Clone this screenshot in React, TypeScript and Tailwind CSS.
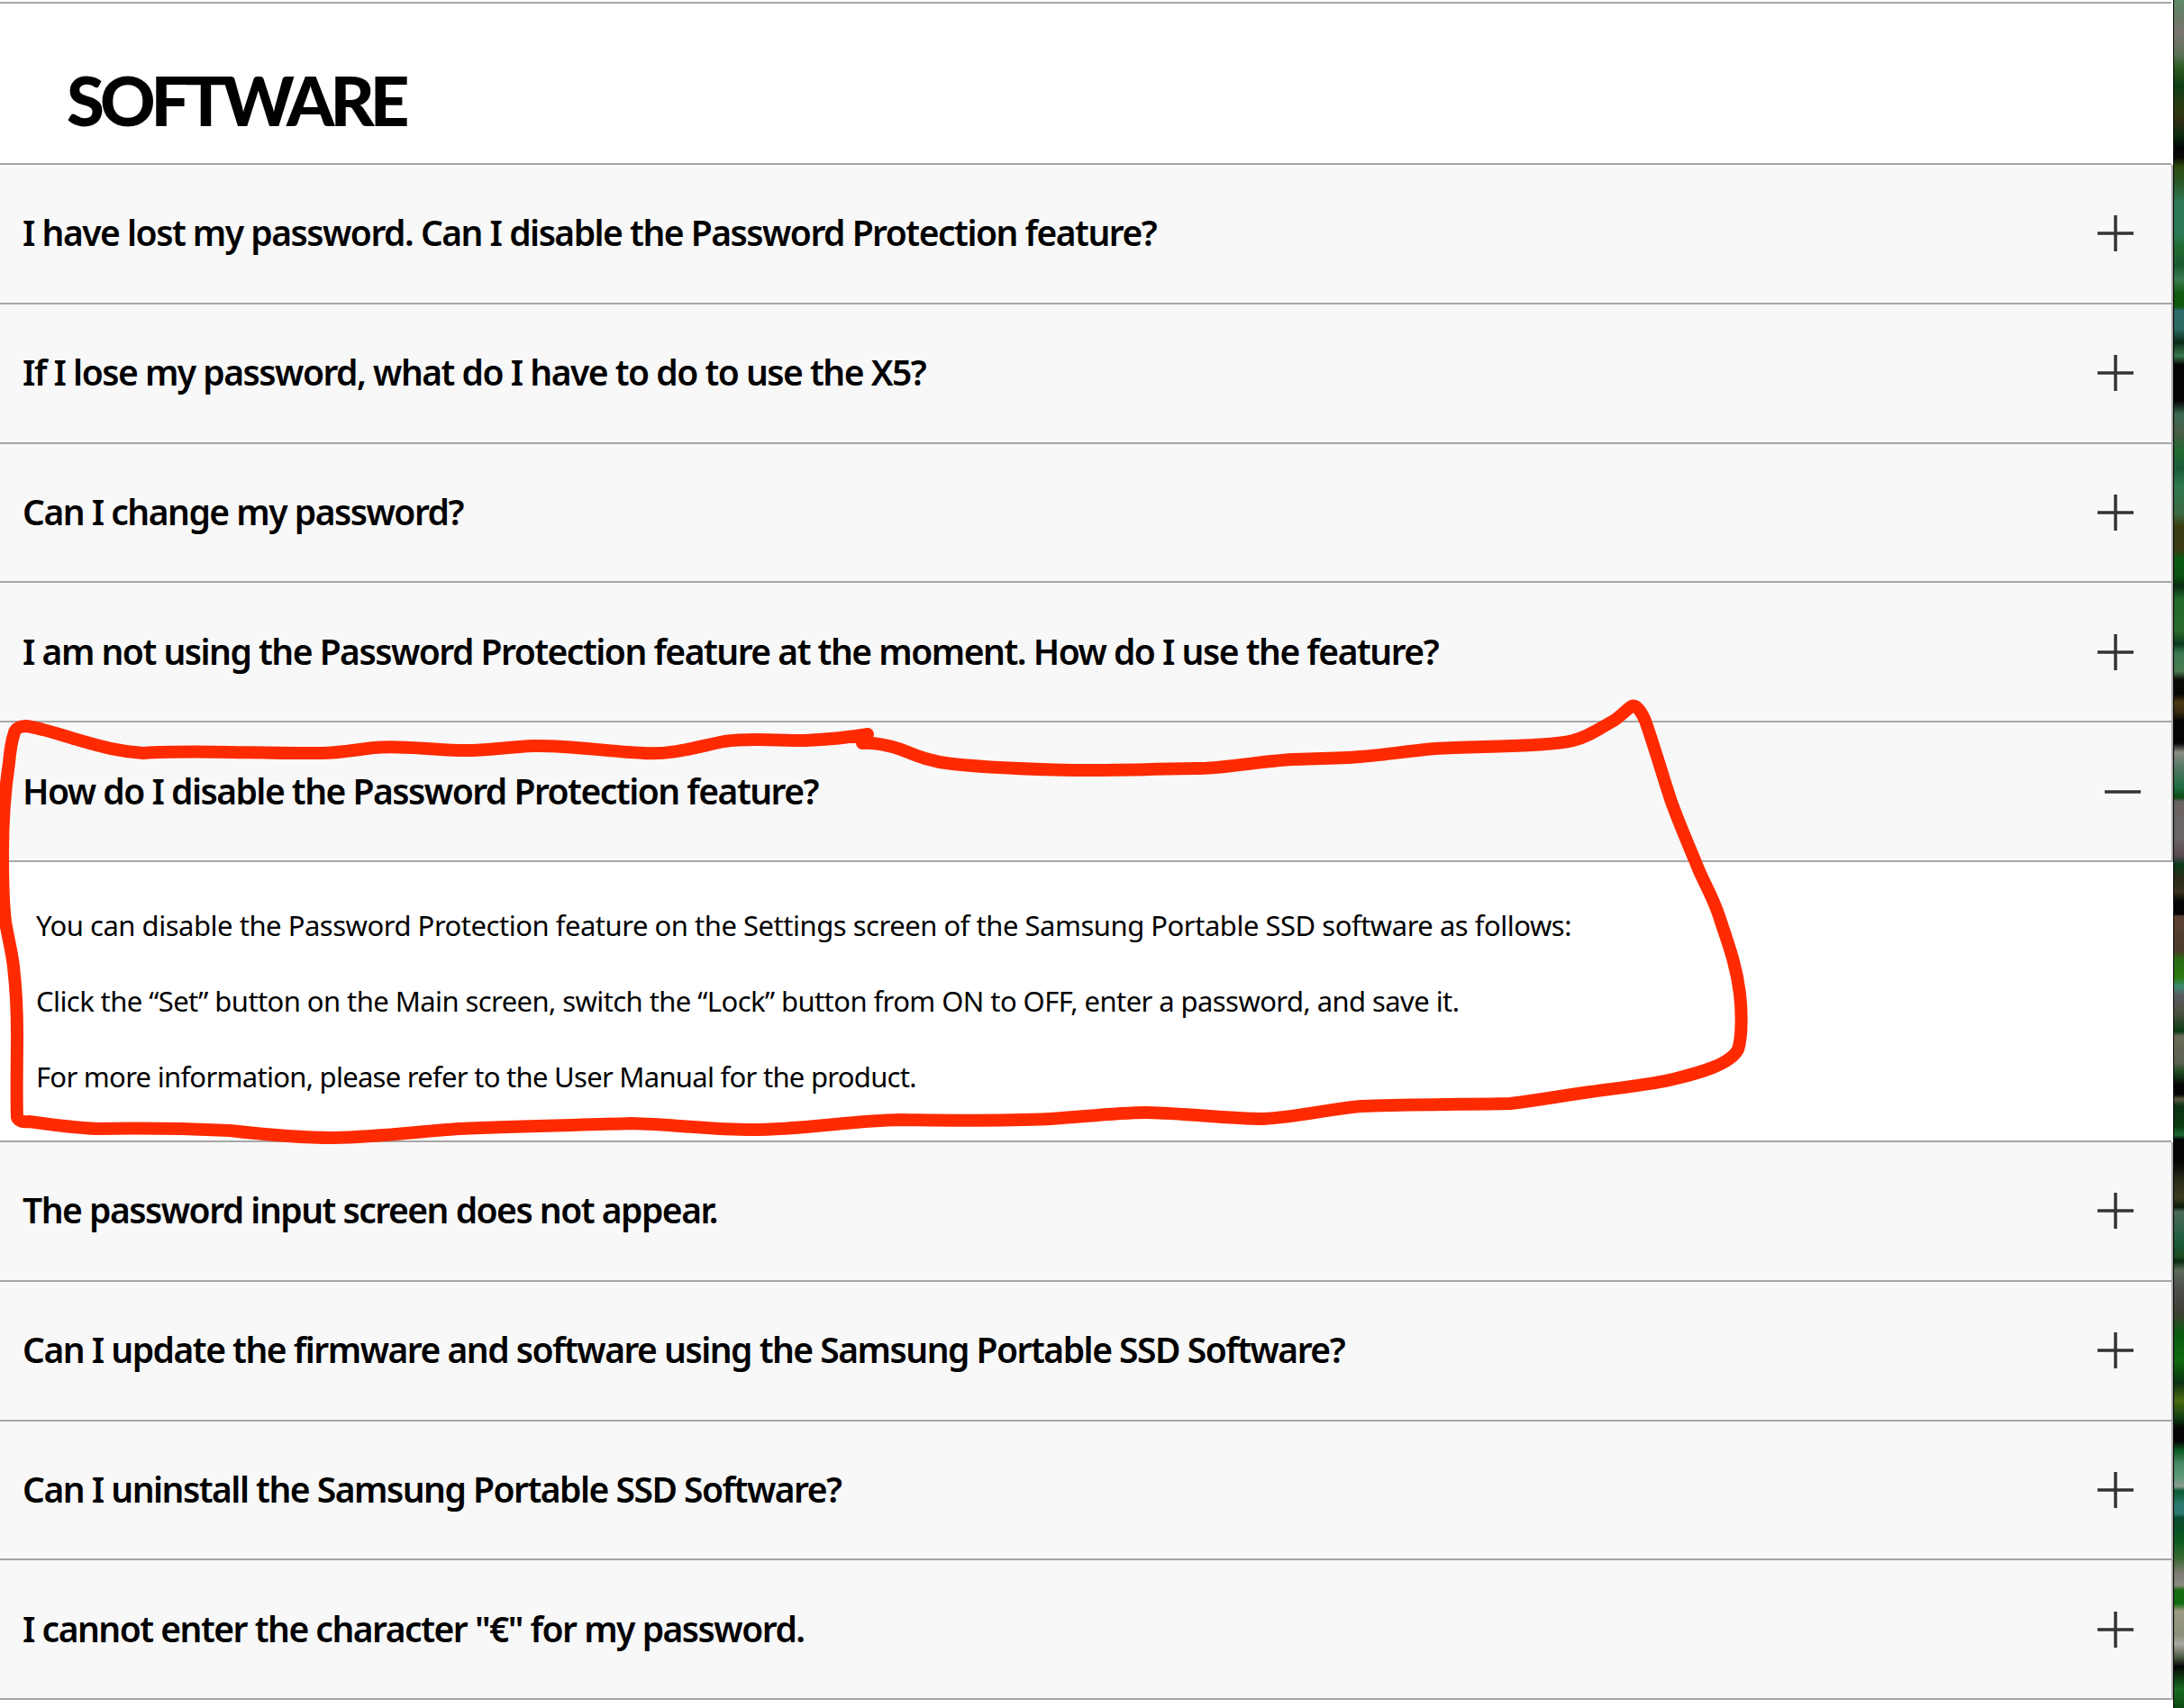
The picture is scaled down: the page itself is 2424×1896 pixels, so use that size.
import React from "react";

const faqsBefore = [
  "I have lost my password. Can I disable the Password Protection feature?",
  "If I lose my password, what do I have to do to use the X5?",
  "Can I change my password?",
  "I am not using the Password Protection feature at the moment. How do I use the feature?",
];

const faqsAfter = [
  "The password input screen does not appear.",
  "Can I update the firmware and software using the Samsung Portable SSD Software?",
  "Can I uninstall the Samsung Portable SSD Software?",
  'I cannot enter the character "€" for my password.',
];

// colours read off the sliver of desktop wallpaper at the right edge
const photoStops: [number, string][] = [
  [0, "#5f8a6a"], [20, "#6b7a68"], [35, "#7b7570"], [60, "#5c7258"], [75, "#2c5a20"], [95, "#0f3d14"],
  [120, "#2b3a12"], [135, "#2e2c12"], [150, "#0a2a10"], [165, "#050505"], [175, "#0a0a05"], [185, "#2c4a0e"],
  [205, "#2a5a2c"], [225, "#2e7a58"], [260, "#2e7a58"], [275, "#1e6a30"], [295, "#1a5a30"], [310, "#3a7a50"],
  [325, "#0f5a10"], [340, "#0c5a0c"], [345, "#2a6a6a"], [365, "#2a6a60"], [380, "#0a2a1a"], [395, "#3a7a50"],
  [405, "#050505"], [445, "#050505"], [460, "#3a6a50"], [480, "#4a5a48"], [500, "#1f6a30"], [520, "#1a5a3a"],
  [540, "#2e7a50"], [570, "#3a6a40"], [585, "#3a3a10"], [610, "#3a3a10"], [620, "#0a5a10"], [640, "#0a5010"],
  [650, "#0a2a10"], [665, "#1f6a2a"], [700, "#2a6a2a"], [715, "#0a3a20"], [725, "#3a7a50"], [745, "#4a7a50"],
  [755, "#0a0a05"], [770, "#050505"], [780, "#4a3a10"], [790, "#3a2a10"], [800, "#050505"], [825, "#050505"],
  [835, "#8a8a80"], [850, "#5a7a68"], [875, "#1a6a40"], [885, "#0a4a10"], [890, "#6a6260"], [930, "#6a6668"],
  [950, "#5a4850"], [960, "#0a3a1a"], [975, "#2a2a1a"], [990, "#3a3020"], [1000, "#050505"], [1015, "#050505"],
  [1017, "#5a4030"], [1055, "#4a3a2a"], [1065, "#2a6a12"], [1085, "#2a7a12"], [1095, "#3a8a70"], [1105, "#5a5a60"],
  [1125, "#4a5040"], [1145, "#0a3a10"], [1150, "#6a6a58"], [1180, "#5a6050"], [1190, "#1a4a20"], [1205, "#050505"],
  [1215, "#050505"], [1220, "#5a5a40"], [1228, "#0a3010"], [1250, "#0a3a10"], [1260, "#1a6a30"], [1265, "#050505"],
  [1290, "#050505"], [1310, "#2a2a1a"], [1330, "#3a3a20"], [1340, "#0a1a08"], [1345, "#4a6a58"], [1380, "#1a5a3a"],
  [1395, "#1a4a20"], [1400, "#0a2a10"], [1410, "#5a6a5a"], [1435, "#4a4a48"], [1460, "#3a4030"], [1480, "#0a5a10"],
  [1510, "#0f6a10"], [1535, "#0a3010"], [1555, "#4a6a10"], [1575, "#0a3a10"], [1585, "#050505"], [1600, "#050505"],
  [1610, "#0a5a20"], [1625, "#4a8a68"], [1640, "#5a9a78"], [1650, "#8a9a90"], [1655, "#0a5a30"], [1670, "#2a7a70"],
  [1680, "#2a7a70"], [1685, "#0a4a30"], [1710, "#0a5a20"], [1730, "#3a6a30"], [1745, "#7a7a70"], [1760, "#8a8a80"],
  [1765, "#1a6a10"], [1780, "#0f6a0f"], [1788, "#9a9a80"], [1815, "#8a9078"], [1825, "#aaa8a0"], [1840, "#4a5a40"],
  [1850, "#050505"], [1860, "#0a3010"], [1875, "#1a6a20"], [1896, "#0a4a10"],
];

const PlusIcon = () => (
  <svg width="40" height="40" viewBox="0 0 40 40" className="shrink-0">
    <path d="M0 20H40M20 0V40" stroke="#333" strokeWidth="3.5" fill="none" />
  </svg>
);

const MinusIcon = () => (
  <svg width="40" height="40" viewBox="0 0 40 40" className="shrink-0">
    <path d="M0 20H40" stroke="#333" strokeWidth="3.5" fill="none" />
  </svg>
);

const FaqRow = ({ text, open = false }: { text: string; open?: boolean }) => (
  <div
    className={`flex h-[154.8px] items-center justify-between border-r-2 border-b-2 border-[#a6a6a6] bg-[#f8f8f8] pl-[25px] ${
      open ? "pr-[34px]" : "pr-[42px]"
    }`}
  >
    <span className="pb-[3px] text-[39px] leading-none font-semibold tracking-[-1.5px] text-black">{text}</span>
    {open ? <MinusIcon /> : <PlusIcon />}
  </div>
);

const Annotation = () => (
  <svg className="pointer-events-none absolute top-0 left-0" width="2424" height="1896" fill="none">
    <path
      d="M963 815 C940 819 915 821 893 822 C860 822 830 819 804 823 C770 830 745 838 714 836 C670 834 630 827 593 828 C560 829 540 834 510 833 C470 832 445 827 415 830 C390 833 375 836 357 836 C290 837 220 832 159 836 C130 834 110 828 89 822 C65 815 45 808 29 806 C22 806 17 809 16 813 C12 825 11 835 10 847 C5 880 3 915 3 947 C3 975 3 1000 6 1023 C9 1042 13 1055 15 1073 C18 1100 19 1125 19 1147 C19 1180 18 1215 19 1240 C20 1244 25 1246 32 1245 C60 1249 85 1252 108 1253 C160 1252 210 1253 255 1255 C290 1259 330 1263 370 1263 C420 1262 465 1256 510 1253 C580 1250 640 1249 701 1247 C745 1248 790 1254 835 1254 C890 1254 945 1244 1000 1243 C1060 1244 1120 1244 1166 1242 C1200 1240 1240 1235 1274 1235 C1320 1236 1360 1242 1402 1242 C1440 1240 1470 1232 1510 1228 C1570 1226 1630 1226 1676 1225 C1710 1221 1735 1216 1765 1212 C1800 1207 1835 1204 1861 1197 C1885 1191 1920 1182 1929 1165 C1934 1150 1933 1120 1931 1103 C1927 1070 1917 1045 1909 1020 C1903 1000 1894 985 1886 967 C1875 940 1864 915 1855 890 C1845 860 1835 825 1826 800 C1822 790 1816 782 1811 784 C1807 786 1799 795 1791 800 C1775 809 1762 818 1746 822 C1730 826 1715 826 1701 827 C1660 829 1625 829 1593 831 C1560 834 1535 838 1510 840 C1485 842 1460 842 1434 843 C1400 845 1365 852 1332 853 C1285 854 1240 855 1191 855 C1145 854 1095 852 1057 848 C1030 845 1015 838 1000 832 C985 827 970 824 957 825"
      stroke="#ff2a00"
      strokeWidth="14"
      strokeLinecap="round"
      strokeLinejoin="round"
    />
  </svg>
);

const App = () => {
  return (
    <div className="relative flex h-[1896px] w-[2424px] overflow-hidden bg-white font-['Noto_Sans',sans-serif] text-black">
      <main className="flex-1 pt-[2px]">
        <div className="mr-[2px] border-t-2 border-[#a6a6a6]" />
        <h1 className="mr-[2px] flex h-[179px] items-center border-b-2 border-[#a6a6a6] pt-[36px] pl-[74px] font-['Lato',sans-serif] text-[76px] leading-none font-black tracking-[-5px]">
          SOFTWARE
        </h1>
        {faqsBefore.map((q) => (
          <FaqRow key={q} text={q} />
        ))}
        <FaqRow text="How do I disable the Password Protection feature?" open />
        <div className="mr-[2px] flex h-[311px] flex-col gap-[48px] border-b-2 border-[#a6a6a6] pt-[52px] pl-[40px] text-[31px] leading-[36px]">
          <p className="tracking-[-0.48px]">You can disable the Password Protection feature on the Settings screen of the Samsung Portable SSD software as follows:</p>
          <p className="tracking-[-0.58px]">Click the “Set” button on the Main screen, switch the “Lock” button from ON to OFF, enter a password, and save it.</p>
          <p className="tracking-[-0.72px]">For more information, please refer to the User Manual for the product.</p>
        </div>
        {faqsAfter.map((q) => (
          <FaqRow key={q} text={q} />
        ))}
      </main>
      <aside className="w-[12px] shrink-0 border-l border-black bg-black">
        <svg className="block h-full w-full" viewBox="0 0 11 1896" preserveAspectRatio="none">
          <defs>
            <linearGradient id="photo" x1="0" y1="0" x2="0" y2="1">
              {photoStops.map(([y, c]) => (
                <stop key={y} offset={y / 1896} stopColor={c} />
              ))}
            </linearGradient>
          </defs>
          <rect width="11" height="1896" fill="url(#photo)" />
        </svg>
      </aside>
      <Annotation />
    </div>
  );
};

export default App;
